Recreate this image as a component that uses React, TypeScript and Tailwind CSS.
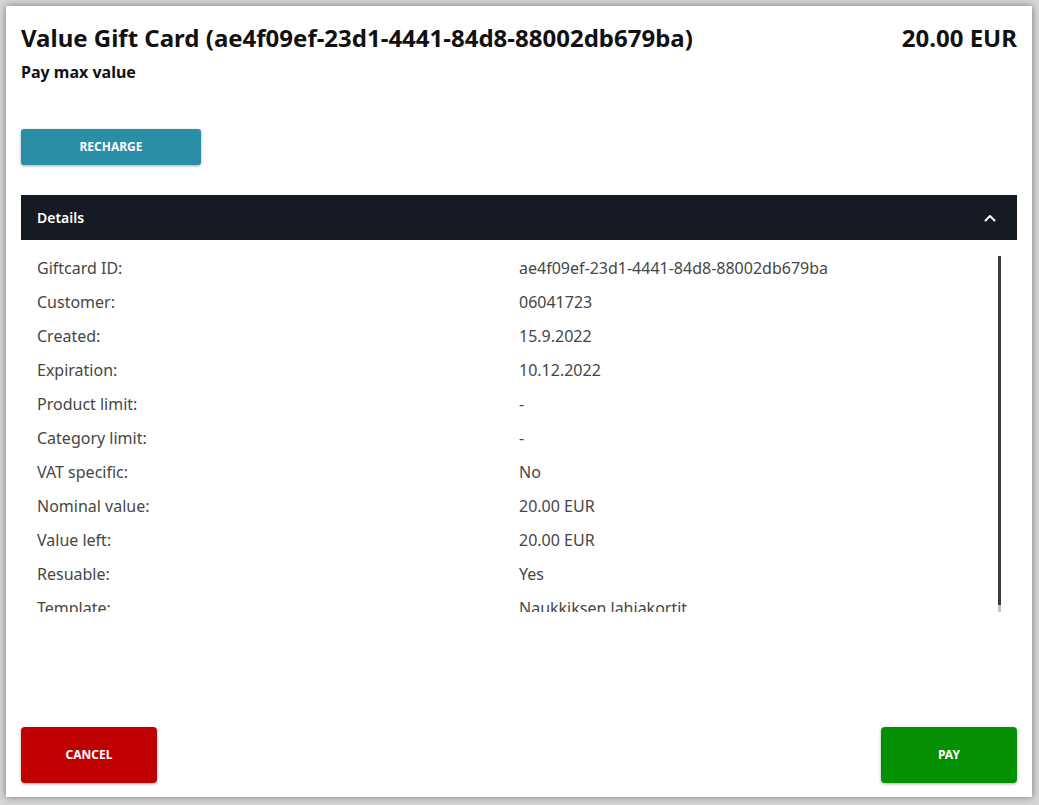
import React from "react";

interface DetailRow {
  label: string;
  value: string;
}

const rows: DetailRow[] = [
  { label: "Giftcard ID:", value: "ae4f09ef-23d1-4441-84d8-88002db679ba" },
  { label: "Customer:", value: "06041723" },
  { label: "Created:", value: "15.9.2022" },
  { label: "Expiration:", value: "10.12.2022" },
  { label: "Product limit:", value: "-" },
  { label: "Category limit:", value: "-" },
  { label: "VAT specific:", value: "No" },
  { label: "Nominal value:", value: "20.00 EUR" },
  { label: "Value left:", value: "20.00 EUR" },
  { label: "Resuable:", value: "Yes" },
  { label: "Template:", value: "Naukkiksen lahjakortit" },
];

function ChevronUp() {
  return (
    <svg width="12" height="8" viewBox="0 0 12 8" fill="none">
      <polyline
        points="1.5,6.5 6,2 10.5,6.5"
        stroke="white"
        strokeWidth="2"
        strokeLinecap="round"
        strokeLinejoin="round"
      />
    </svg>
  );
}

export default function App() {
  return (
    <div
      className="w-full h-[805px] pt-[6px] pl-[6px] pr-[7px] pb-[8px] bg-[#d6d6d6]"
      style={{ fontFamily: '"Noto Sans", "Open Sans", sans-serif' }}
    >
      <div className="h-full bg-white shadow-[0_0_7px_rgba(0,0,0,0.45)] flex flex-col px-[15px] pt-[14px] pb-[14px]">
        {/* Header */}
        <div className="flex justify-between items-start">
          <h1 className="text-[24px] font-bold text-[#111]">
            Value Gift Card (ae4f09ef-23d1-4441-84d8-88002db679ba)
          </h1>
          <span className="text-[24px] font-bold text-[#111]">20.00 EUR</span>
        </div>
        <p className="text-[16px] font-bold text-[#111] mt-[4px]">
          Pay max value
        </p>

        <button className="mt-[45px] w-[180px] h-[36px] rounded-[3px] bg-[#2a8ea6] text-white text-[12px] font-bold shadow-[0_1px_3px_rgba(0,0,0,0.35)]">
          RECHARGE
        </button>

        {/* Details panel */}
        <div className="mt-[30px]">
          <div className="h-[45px] bg-[#161a22] flex items-center justify-between pl-4 pr-[21px]">
            <span className="text-white text-[14px] font-semibold">Details</span>
            <ChevronUp />
          </div>
          <div className="mt-4 px-4 flex h-[356px] overflow-hidden">
            <div className="flex-1 flex flex-col gap-[10px]">
              {rows.map((row) => (
                <div
                  key={row.label}
                  className="grid grid-cols-[482px_1fr] h-[24px] shrink-0 items-center text-[16px] text-[#464646]"
                >
                  <span>{row.label}</span>
                  <span>{row.value}</span>
                </div>
              ))}
            </div>
            <div className="w-[3px] h-full flex flex-col">
              <div className="flex-1 bg-[#3c3c3c]" />
              <div className="h-[7px] bg-[#c4c4c4]" />
            </div>
          </div>
        </div>

        <div className="flex-1" />

        {/* Actions */}
        <div className="flex justify-between">
          <button className="w-[136px] h-[56px] rounded-[4px] bg-[#c00000] text-white text-[12px] font-bold shadow-[0_1px_3px_rgba(0,0,0,0.35)]">
            CANCEL
          </button>
          <button className="w-[136px] h-[56px] rounded-[4px] bg-[#039003] text-white text-[12px] font-bold shadow-[0_1px_3px_rgba(0,0,0,0.35)]">
            PAY
          </button>
        </div>
      </div>
    </div>
  );
}
